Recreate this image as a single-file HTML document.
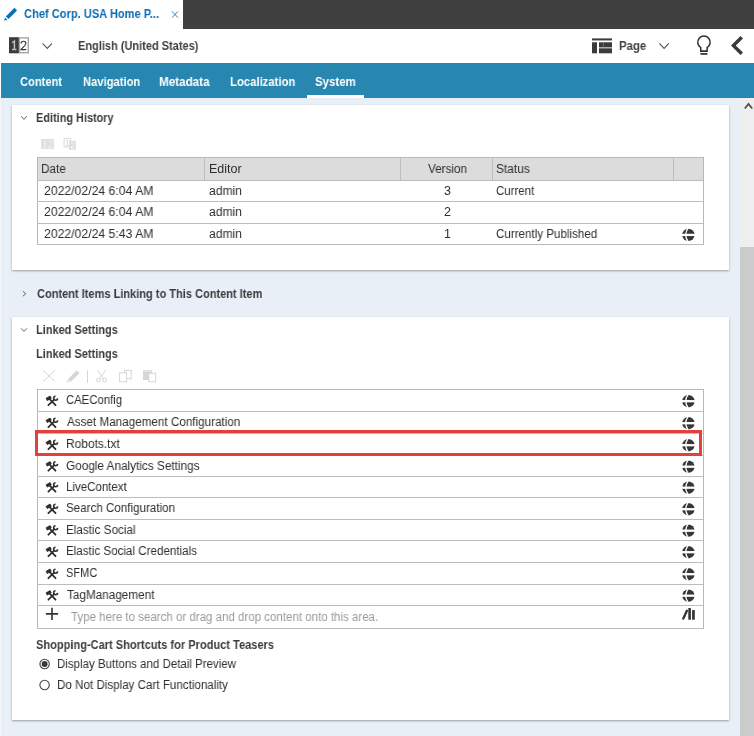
<!DOCTYPE html>
<html><head><meta charset="utf-8">
<style>
html,body{margin:0;padding:0}
body{width:754px;height:736px;overflow:hidden;position:relative;background:#e8eff6;font-family:"Liberation Sans",sans-serif}
.a{position:absolute}
.t{position:absolute;white-space:pre;line-height:1;transform-origin:0 0;will-change:transform;font-family:"Liberation Sans",sans-serif}
.panel{position:absolute;background:#fff;box-shadow:0 1px 2px rgba(0,0,0,.35)}
.hl{position:absolute;height:1px;background:#bdbdbd}
.vl{position:absolute;width:1px;background:#bdbdbd}
svg{position:absolute;overflow:visible}
</style></head><body>
<!-- top strip -->
<div class="a" style="left:0;top:0;width:754px;height:98px;background:#fff"></div>
<div class="a" style="left:183px;top:0;width:571px;height:29px;background:#404040"></div>
<!-- blue tab bar -->
<div class="a" style="left:1px;top:63px;width:753px;height:35px;background:#2787b1"></div>
<div class="a" style="left:307px;top:95px;width:57px;height:3px;background:#fff"></div>
<!-- left light column -->
<div class="a" style="left:0;top:98px;width:1px;height:638px;background:#f3f7fa"></div>
<!-- scrollbar -->
<div class="a" style="left:740px;top:98px;width:14px;height:638px;background:#efefef"></div>
<div class="a" style="left:740px;top:247px;width:14px;height:489px;background:#cbcbcb"></div>
<svg style="left:0;top:0" width="754" height="736">
  <polyline points="744.8,108.5 748.5,104 752.2,108.5" fill="none" stroke="#505050" stroke-width="1.8"/>
</svg>

<!-- panels -->
<div class="panel" style="left:12px;top:105px;width:717px;height:165px"></div>
<div class="panel" style="left:12px;top:317px;width:717px;height:403px"></div>

<!-- editing history table -->
<div class="a" style="left:37px;top:157px;width:667px;height:88px;box-sizing:border-box;border:1px solid #b8b8b8;background:#fff"></div>
<div class="a" style="left:38px;top:158px;width:665px;height:22px;background:#dcdcdc"></div>
<div class="hl" style="left:38px;top:180px;width:665px"></div>
<div class="hl" style="left:38px;top:201px;width:665px"></div>
<div class="hl" style="left:38px;top:223px;width:665px"></div>
<div class="vl" style="left:204px;top:158px;height:22px"></div>
<div class="vl" style="left:400px;top:158px;height:22px"></div>
<div class="vl" style="left:492px;top:158px;height:22px"></div>
<div class="vl" style="left:673px;top:158px;height:22px"></div>

<!-- linked list -->
<div class="a" style="left:37px;top:389px;width:667px;height:240px;box-sizing:border-box;border:1px solid #b8b8b8;background:#fff"></div>
<div class="hl" style="left:38px;top:411px;width:665px"></div>
<div class="hl" style="left:38px;top:433px;width:665px"></div>
<div class="hl" style="left:38px;top:455px;width:665px"></div>
<div class="hl" style="left:38px;top:476px;width:665px"></div>
<div class="hl" style="left:38px;top:497px;width:665px"></div>
<div class="hl" style="left:38px;top:519px;width:665px"></div>
<div class="hl" style="left:38px;top:540px;width:665px"></div>
<div class="hl" style="left:38px;top:562px;width:665px"></div>
<div class="hl" style="left:38px;top:584px;width:665px"></div>
<div class="hl" style="left:38px;top:605px;width:665px"></div>
<div class="a" style="left:35px;top:430px;width:667px;height:26px;box-sizing:border-box;border:3px solid #e2403a"></div>

<svg style="left:0;top:0" width="754" height="736">
<polygon points="14.5,7.8 17,10.4 8.5,19.1 5.8,16.4" fill="#0b6db3"/>
<polygon points="4.9,17.4 7.5,20 4.2,20.5" fill="#0b6db3"/>
<path d="M172,11.3 L178,17.7 M178,11.3 L172,17.7" stroke="#2a7fc0" stroke-width="0.95"/>
<rect x="9" y="37.2" width="10.2" height="16.1" fill="#3b3b3b"/>
<rect x="19.4" y="37.9" width="8.9" height="14.8" fill="#fff" stroke="#a6a6a6" stroke-width="1.4"/>
<path d="M12.2,42.6 L14.4,41.2 L14.4,49.4 M12,49.4 L16.4,49.4" fill="none" stroke="#bdbdbd" stroke-width="1.5"/>
<path d="M21,43.4 C21.2,40.6 25.9,40.6 25.9,43.4 C25.9,45.4 22.4,47.6 21,49.6 L26.2,49.6" fill="none" stroke="#333" stroke-width="1.1"/>
<polyline points="42.6,43.4 47.3,48.4 52,43.4" fill="none" stroke="#555" stroke-width="1.1"/>
<rect x="592" y="38.4" width="20" height="2" fill="#3b3b3b"/>
<rect x="592" y="42.3" width="5" height="11" fill="#3b3b3b"/>
<rect x="599" y="42.3" width="13" height="5.1" fill="#3b3b3b"/>
<rect x="599" y="48.3" width="13" height="5" fill="#3b3b3b"/>
<rect x="603.4" y="42.3" width="0.6" height="5.1" fill="#888"/>
<polyline points="659.4,43.4 664.1,48.4 668.8,43.4" fill="none" stroke="#555" stroke-width="1.1"/>
<path d="M700.75,47.6 A6.2,6.2 0 1 1 707.15,47.6 L707.15,51.1 L700.75,51.1 Z" fill="none" stroke="#333" stroke-width="1.55"/>
<rect x="700.4" y="53" width="7" height="1.8" fill="#3a3a3a"/>
<polygon points="740.5,35.9 743,38.4 735.8,45.4 743,52.6 740.5,55 731,45.4" fill="#3a3a3a"/>
<polyline points="21.2,116.2 24,119.4 26.8,116.2" fill="none" stroke="#666" stroke-width="1"/>
<polyline points="22.8,291.2 25.9,293.7 22.8,296.2" fill="none" stroke="#666" stroke-width="1"/>
<polyline points="21.2,328.4 24,331.4 26.8,328.4" fill="none" stroke="#666" stroke-width="1"/>
<rect x="41.1" y="139" width="12.8" height="9.8" fill="#dedede"/>
<path d="M43.4,141.6 L45,140.6 L45,147 M43.2,147 L46.6,147" fill="none" stroke="#f6f6f6" stroke-width="1"/>
<path d="M48.6,142.4 C48.7,140.4 52.2,140.4 52.2,142.4 C52.2,143.8 49.6,145.6 48.6,147.2 L52.4,147.2" fill="none" stroke="#f6f6f6" stroke-width="1"/>
<rect x="64.1" y="138.5" width="6.6" height="8.4" fill="none" stroke="#dedede" stroke-width="1"/>
<path d="M65.8,140.6 L67.4,139.8 L67.4,145.6 M65.6,145.6 L69.2,145.6" fill="none" stroke="#dedede" stroke-width="1"/>
<rect x="68.9" y="140.7" width="7" height="9.2" fill="#dedede"/>
<path d="M70.6,143.6 C70.7,142.0 73.9,142.0 73.9,143.6 C73.9,144.8 71.6,146.4 70.6,148.0 L74.2,148.0" fill="none" stroke="#f6f6f6" stroke-width="1"/>
<g transform="translate(688.4,234.9)">
<circle r="6.2" fill="#363636"/>
<rect x="-7" y="-1.15" width="14" height="2.3" fill="#fff"/>
<path d="M-0.2,-6.8 Q-5.2,0 -0.2,6.8" fill="none" stroke="#fff" stroke-width="1.3"/>
</g>
<path d="M43.2,370.3 L55,381.6 M55,370.3 L43.2,381.6" stroke="#d6d6d6" stroke-width="1"/>
<polygon points="76.8,370.2 79.6,373 70.6,382 67.8,379.2" fill="#d6d6d6"/>
<polygon points="67.2,380 69.4,382.2 66.6,382.4" fill="#d6d6d6"/>
<rect x="87" y="370.2" width="1" height="12.6" fill="#d6d6d6"/>
<path d="M97.6,370.2 L103.5,379 M105.6,370.2 L99.6,379" stroke="#d6d6d6" stroke-width="1"/>
<circle cx="98.4" cy="380" r="1.9" fill="none" stroke="#d6d6d6" stroke-width="1"/>
<circle cx="104.7" cy="380" r="1.9" fill="none" stroke="#d6d6d6" stroke-width="1"/>
<rect x="124.6" y="370.4" width="6.6" height="8.4" fill="#fff" stroke="#d6d6d6" stroke-width="1"/>
<rect x="119.6" y="372.8" width="7" height="9" fill="#fff" stroke="#d6d6d6" stroke-width="1"/>
<rect x="143" y="370" width="9" height="10" fill="#d6d6d6"/>
<rect x="143.5" y="370.5" width="8" height="1.2" fill="#ececec"/>
<rect x="148.8" y="373.2" width="6.8" height="8.6" fill="#fff" stroke="#d6d6d6" stroke-width="1"/>
<g transform="translate(688.4,401.2)">
<circle r="6.2" fill="#363636"/>
<rect x="-7" y="-1.15" width="14" height="2.3" fill="#fff"/>
<path d="M-0.2,-6.8 Q-5.2,0 -0.2,6.8" fill="none" stroke="#fff" stroke-width="1.3"/>
</g>
<g transform="translate(44,393.0)">
<line x1="5.0" y1="5.3" x2="11.5" y2="12.2" stroke="#2f2f2f" stroke-width="1.8" stroke-linecap="round"/>
<line x1="10.2" y1="6.6" x2="4.4" y2="12.2" stroke="#2f2f2f" stroke-width="1.8" stroke-linecap="round"/>
<g transform="translate(4.7,5.3) rotate(-32)"><rect x="-2.7" y="-1.65" width="5.4" height="3.3" rx="0.5" fill="#2f2f2f"/></g>
<path d="M13.69,5.37 A2.0,2.0 0 1 1 11.53,3.21" fill="none" stroke="#2f2f2f" stroke-width="1.6"/>
</g>
<g transform="translate(688.4,423.2)">
<circle r="6.2" fill="#363636"/>
<rect x="-7" y="-1.15" width="14" height="2.3" fill="#fff"/>
<path d="M-0.2,-6.8 Q-5.2,0 -0.2,6.8" fill="none" stroke="#fff" stroke-width="1.3"/>
</g>
<g transform="translate(44,415.0)">
<line x1="5.0" y1="5.3" x2="11.5" y2="12.2" stroke="#2f2f2f" stroke-width="1.8" stroke-linecap="round"/>
<line x1="10.2" y1="6.6" x2="4.4" y2="12.2" stroke="#2f2f2f" stroke-width="1.8" stroke-linecap="round"/>
<g transform="translate(4.7,5.3) rotate(-32)"><rect x="-2.7" y="-1.65" width="5.4" height="3.3" rx="0.5" fill="#2f2f2f"/></g>
<path d="M13.69,5.37 A2.0,2.0 0 1 1 11.53,3.21" fill="none" stroke="#2f2f2f" stroke-width="1.6"/>
</g>
<g transform="translate(688.4,445.2)">
<circle r="6.2" fill="#363636"/>
<rect x="-7" y="-1.15" width="14" height="2.3" fill="#fff"/>
<path d="M-0.2,-6.8 Q-5.2,0 -0.2,6.8" fill="none" stroke="#fff" stroke-width="1.3"/>
</g>
<g transform="translate(44,437.0)">
<line x1="5.0" y1="5.3" x2="11.5" y2="12.2" stroke="#2f2f2f" stroke-width="1.8" stroke-linecap="round"/>
<line x1="10.2" y1="6.6" x2="4.4" y2="12.2" stroke="#2f2f2f" stroke-width="1.8" stroke-linecap="round"/>
<g transform="translate(4.7,5.3) rotate(-32)"><rect x="-2.7" y="-1.65" width="5.4" height="3.3" rx="0.5" fill="#2f2f2f"/></g>
<path d="M13.69,5.37 A2.0,2.0 0 1 1 11.53,3.21" fill="none" stroke="#2f2f2f" stroke-width="1.6"/>
</g>
<g transform="translate(688.4,466.7)">
<circle r="6.2" fill="#363636"/>
<rect x="-7" y="-1.15" width="14" height="2.3" fill="#fff"/>
<path d="M-0.2,-6.8 Q-5.2,0 -0.2,6.8" fill="none" stroke="#fff" stroke-width="1.3"/>
</g>
<g transform="translate(44,458.5)">
<line x1="5.0" y1="5.3" x2="11.5" y2="12.2" stroke="#2f2f2f" stroke-width="1.8" stroke-linecap="round"/>
<line x1="10.2" y1="6.6" x2="4.4" y2="12.2" stroke="#2f2f2f" stroke-width="1.8" stroke-linecap="round"/>
<g transform="translate(4.7,5.3) rotate(-32)"><rect x="-2.7" y="-1.65" width="5.4" height="3.3" rx="0.5" fill="#2f2f2f"/></g>
<path d="M13.69,5.37 A2.0,2.0 0 1 1 11.53,3.21" fill="none" stroke="#2f2f2f" stroke-width="1.6"/>
</g>
<g transform="translate(688.4,487.7)">
<circle r="6.2" fill="#363636"/>
<rect x="-7" y="-1.15" width="14" height="2.3" fill="#fff"/>
<path d="M-0.2,-6.8 Q-5.2,0 -0.2,6.8" fill="none" stroke="#fff" stroke-width="1.3"/>
</g>
<g transform="translate(44,479.5)">
<line x1="5.0" y1="5.3" x2="11.5" y2="12.2" stroke="#2f2f2f" stroke-width="1.8" stroke-linecap="round"/>
<line x1="10.2" y1="6.6" x2="4.4" y2="12.2" stroke="#2f2f2f" stroke-width="1.8" stroke-linecap="round"/>
<g transform="translate(4.7,5.3) rotate(-32)"><rect x="-2.7" y="-1.65" width="5.4" height="3.3" rx="0.5" fill="#2f2f2f"/></g>
<path d="M13.69,5.37 A2.0,2.0 0 1 1 11.53,3.21" fill="none" stroke="#2f2f2f" stroke-width="1.6"/>
</g>
<g transform="translate(688.4,509.2)">
<circle r="6.2" fill="#363636"/>
<rect x="-7" y="-1.15" width="14" height="2.3" fill="#fff"/>
<path d="M-0.2,-6.8 Q-5.2,0 -0.2,6.8" fill="none" stroke="#fff" stroke-width="1.3"/>
</g>
<g transform="translate(44,501.0)">
<line x1="5.0" y1="5.3" x2="11.5" y2="12.2" stroke="#2f2f2f" stroke-width="1.8" stroke-linecap="round"/>
<line x1="10.2" y1="6.6" x2="4.4" y2="12.2" stroke="#2f2f2f" stroke-width="1.8" stroke-linecap="round"/>
<g transform="translate(4.7,5.3) rotate(-32)"><rect x="-2.7" y="-1.65" width="5.4" height="3.3" rx="0.5" fill="#2f2f2f"/></g>
<path d="M13.69,5.37 A2.0,2.0 0 1 1 11.53,3.21" fill="none" stroke="#2f2f2f" stroke-width="1.6"/>
</g>
<g transform="translate(688.4,530.7)">
<circle r="6.2" fill="#363636"/>
<rect x="-7" y="-1.15" width="14" height="2.3" fill="#fff"/>
<path d="M-0.2,-6.8 Q-5.2,0 -0.2,6.8" fill="none" stroke="#fff" stroke-width="1.3"/>
</g>
<g transform="translate(44,522.5)">
<line x1="5.0" y1="5.3" x2="11.5" y2="12.2" stroke="#2f2f2f" stroke-width="1.8" stroke-linecap="round"/>
<line x1="10.2" y1="6.6" x2="4.4" y2="12.2" stroke="#2f2f2f" stroke-width="1.8" stroke-linecap="round"/>
<g transform="translate(4.7,5.3) rotate(-32)"><rect x="-2.7" y="-1.65" width="5.4" height="3.3" rx="0.5" fill="#2f2f2f"/></g>
<path d="M13.69,5.37 A2.0,2.0 0 1 1 11.53,3.21" fill="none" stroke="#2f2f2f" stroke-width="1.6"/>
</g>
<g transform="translate(688.4,552.2)">
<circle r="6.2" fill="#363636"/>
<rect x="-7" y="-1.15" width="14" height="2.3" fill="#fff"/>
<path d="M-0.2,-6.8 Q-5.2,0 -0.2,6.8" fill="none" stroke="#fff" stroke-width="1.3"/>
</g>
<g transform="translate(44,544.0)">
<line x1="5.0" y1="5.3" x2="11.5" y2="12.2" stroke="#2f2f2f" stroke-width="1.8" stroke-linecap="round"/>
<line x1="10.2" y1="6.6" x2="4.4" y2="12.2" stroke="#2f2f2f" stroke-width="1.8" stroke-linecap="round"/>
<g transform="translate(4.7,5.3) rotate(-32)"><rect x="-2.7" y="-1.65" width="5.4" height="3.3" rx="0.5" fill="#2f2f2f"/></g>
<path d="M13.69,5.37 A2.0,2.0 0 1 1 11.53,3.21" fill="none" stroke="#2f2f2f" stroke-width="1.6"/>
</g>
<g transform="translate(688.4,574.2)">
<circle r="6.2" fill="#363636"/>
<rect x="-7" y="-1.15" width="14" height="2.3" fill="#fff"/>
<path d="M-0.2,-6.8 Q-5.2,0 -0.2,6.8" fill="none" stroke="#fff" stroke-width="1.3"/>
</g>
<g transform="translate(44,566.0)">
<line x1="5.0" y1="5.3" x2="11.5" y2="12.2" stroke="#2f2f2f" stroke-width="1.8" stroke-linecap="round"/>
<line x1="10.2" y1="6.6" x2="4.4" y2="12.2" stroke="#2f2f2f" stroke-width="1.8" stroke-linecap="round"/>
<g transform="translate(4.7,5.3) rotate(-32)"><rect x="-2.7" y="-1.65" width="5.4" height="3.3" rx="0.5" fill="#2f2f2f"/></g>
<path d="M13.69,5.37 A2.0,2.0 0 1 1 11.53,3.21" fill="none" stroke="#2f2f2f" stroke-width="1.6"/>
</g>
<g transform="translate(688.4,595.7)">
<circle r="6.2" fill="#363636"/>
<rect x="-7" y="-1.15" width="14" height="2.3" fill="#fff"/>
<path d="M-0.2,-6.8 Q-5.2,0 -0.2,6.8" fill="none" stroke="#fff" stroke-width="1.3"/>
</g>
<g transform="translate(44,587.5)">
<line x1="5.0" y1="5.3" x2="11.5" y2="12.2" stroke="#2f2f2f" stroke-width="1.8" stroke-linecap="round"/>
<line x1="10.2" y1="6.6" x2="4.4" y2="12.2" stroke="#2f2f2f" stroke-width="1.8" stroke-linecap="round"/>
<g transform="translate(4.7,5.3) rotate(-32)"><rect x="-2.7" y="-1.65" width="5.4" height="3.3" rx="0.5" fill="#2f2f2f"/></g>
<path d="M13.69,5.37 A2.0,2.0 0 1 1 11.53,3.21" fill="none" stroke="#2f2f2f" stroke-width="1.6"/>
</g>
<path d="M52,607.8 L52,620 M45.9,613.9 L58.1,613.9" stroke="#333" stroke-width="1.6"/>
<line x1="683.3" y1="618.6" x2="686.9" y2="610.8" stroke="#333" stroke-width="2.3" stroke-linecap="round"/>
<rect x="688.3" y="608" width="2.6" height="11.8" rx="0.6" fill="#333"/>
<rect x="692.1" y="609.9" width="2.7" height="9.9" rx="0.6" fill="#333"/>
<circle cx="44.6" cy="664" r="4.7" fill="#fff" stroke="#444" stroke-width="1.1"/>
<circle cx="44.6" cy="664" r="3" fill="#3a3a3a"/>
<circle cx="44.6" cy="685" r="4.7" fill="#fff" stroke="#444" stroke-width="1.1"/>
</svg>
<div class="t" style="left:24.20px;top:8.39px;font-size:12.3px;font-weight:700;color:#0b6db3;transform:scaleX(0.9022);">Chef Corp. USA Home P...</div>
<div class="t" style="left:77.80px;top:39.84px;font-size:12px;font-weight:700;color:#404040;transform:scaleX(0.9167);">English (United States)</div>
<div class="t" style="left:618.80px;top:39.54px;font-size:12px;font-weight:700;color:#404040;transform:scaleX(0.9481);">Page</div>
<div class="t" style="left:20.20px;top:76.42px;font-size:12.5px;font-weight:700;color:#ffffff;transform:scaleX(0.8895);">Content</div>
<div class="t" style="left:83.20px;top:76.42px;font-size:12.5px;font-weight:700;color:#ffffff;transform:scaleX(0.8951);">Navigation</div>
<div class="t" style="left:158.80px;top:76.42px;font-size:12.5px;font-weight:700;color:#ffffff;transform:scaleX(0.9338);">Metadata</div>
<div class="t" style="left:230.20px;top:76.42px;font-size:12.5px;font-weight:700;color:#ffffff;transform:scaleX(0.9054);">Localization</div>
<div class="t" style="left:315.20px;top:76.42px;font-size:12.5px;font-weight:700;color:#ffffff;transform:scaleX(0.9172);">System</div>
<div class="t" style="left:36.20px;top:111.69px;font-size:12.3px;font-weight:700;color:#3b3b3b;transform:scaleX(0.8873);">Editing History</div>
<div class="t" style="left:37.20px;top:288.29px;font-size:12.3px;font-weight:700;color:#3b3b3b;transform:scaleX(0.8966);">Content Items Linking to This Content Item</div>
<div class="t" style="left:36.20px;top:324.39px;font-size:12.3px;font-weight:700;color:#3b3b3b;transform:scaleX(0.8934);">Linked Settings</div>
<div class="t" style="left:35.60px;top:347.59px;font-size:12.3px;font-weight:700;color:#3b3b3b;transform:scaleX(0.8934);">Linked Settings</div>
<div class="t" style="left:41.30px;top:162.82px;font-size:12.5px;font-weight:400;color:#2e2e2e;transform:scaleX(0.9392);">Date</div>
<div class="t" style="left:209.10px;top:162.82px;font-size:12.5px;font-weight:400;color:#2e2e2e;">Editor</div>
<div class="t" style="left:427.70px;top:162.82px;font-size:12.5px;font-weight:400;color:#2e2e2e;transform:scaleX(0.9352);">Version</div>
<div class="t" style="left:495.70px;top:162.82px;font-size:12.5px;font-weight:400;color:#2e2e2e;transform:scaleX(0.9538);">Status</div>
<div class="t" style="left:43.90px;top:185.02px;font-size:12.5px;font-weight:400;color:#2e2e2e;transform:scaleX(0.9776);">2022/02/24 6:04 AM</div>
<div class="t" style="left:209.10px;top:185.02px;font-size:12.5px;font-weight:400;color:#2e2e2e;transform:scaleX(0.9693);">admin</div>
<div class="t" style="left:443.50px;top:185.02px;font-size:12.5px;font-weight:400;color:#2e2e2e;">3</div>
<div class="t" style="left:495.70px;top:185.02px;font-size:12.5px;font-weight:400;color:#2e2e2e;transform:scaleX(0.9163);">Current</div>
<div class="t" style="left:43.90px;top:206.32px;font-size:12.5px;font-weight:400;color:#2e2e2e;transform:scaleX(0.9776);">2022/02/24 6:04 AM</div>
<div class="t" style="left:209.10px;top:206.32px;font-size:12.5px;font-weight:400;color:#2e2e2e;transform:scaleX(0.9693);">admin</div>
<div class="t" style="left:443.50px;top:206.32px;font-size:12.5px;font-weight:400;color:#2e2e2e;">2</div>
<div class="t" style="left:43.90px;top:227.82px;font-size:12.5px;font-weight:400;color:#2e2e2e;transform:scaleX(0.9776);">2022/02/24 5:43 AM</div>
<div class="t" style="left:209.10px;top:227.82px;font-size:12.5px;font-weight:400;color:#2e2e2e;transform:scaleX(0.9693);">admin</div>
<div class="t" style="left:444.30px;top:227.82px;font-size:12.5px;font-weight:400;color:#2e2e2e;">1</div>
<div class="t" style="left:495.70px;top:227.82px;font-size:12.5px;font-weight:400;color:#2e2e2e;transform:scaleX(0.9276);">Currently Published</div>
<div class="t" style="left:66.30px;top:394.22px;font-size:12.5px;font-weight:400;color:#2e2e2e;transform:scaleX(0.9055);">CAEConfig</div>
<div class="t" style="left:67.30px;top:416.22px;font-size:12.5px;font-weight:400;color:#2e2e2e;transform:scaleX(0.9346);">Asset Management Configuration</div>
<div class="t" style="left:66.30px;top:438.22px;font-size:12.5px;font-weight:400;color:#2e2e2e;transform:scaleX(0.9559);">Robots.txt</div>
<div class="t" style="left:66.30px;top:459.72px;font-size:12.5px;font-weight:400;color:#2e2e2e;transform:scaleX(0.9425);">Google Analytics Settings</div>
<div class="t" style="left:66.30px;top:480.72px;font-size:12.5px;font-weight:400;color:#2e2e2e;transform:scaleX(0.9210);">LiveContext</div>
<div class="t" style="left:66.30px;top:502.22px;font-size:12.5px;font-weight:400;color:#2e2e2e;transform:scaleX(0.9282);">Search Configuration</div>
<div class="t" style="left:66.30px;top:523.72px;font-size:12.5px;font-weight:400;color:#2e2e2e;transform:scaleX(0.9362);">Elastic Social</div>
<div class="t" style="left:66.30px;top:545.22px;font-size:12.5px;font-weight:400;color:#2e2e2e;transform:scaleX(0.9288);">Elastic Social Credentials</div>
<div class="t" style="left:66.30px;top:567.22px;font-size:12.5px;font-weight:400;color:#2e2e2e;transform:scaleX(0.8808);">SFMC</div>
<div class="t" style="left:67.30px;top:588.72px;font-size:12.5px;font-weight:400;color:#2e2e2e;transform:scaleX(0.9385);">TagManagement</div>
<div class="t" style="left:70.90px;top:611.12px;font-size:12.5px;font-weight:400;color:#9a9a9a;transform:scaleX(0.9210);">Type here to search or drag and drop content onto this area.</div>
<div class="t" style="left:36.40px;top:638.89px;font-size:12.3px;font-weight:700;color:#3b3b3b;transform:scaleX(0.8985);">Shopping-Cart Shortcuts for Product Teasers</div>
<div class="t" style="left:56.70px;top:657.92px;font-size:12.5px;font-weight:400;color:#2e2e2e;transform:scaleX(0.9201);">Display Buttons and Detail Preview</div>
<div class="t" style="left:56.70px;top:678.82px;font-size:12.5px;font-weight:400;color:#2e2e2e;transform:scaleX(0.9288);">Do Not Display Cart Functionality</div>
</body></html>
